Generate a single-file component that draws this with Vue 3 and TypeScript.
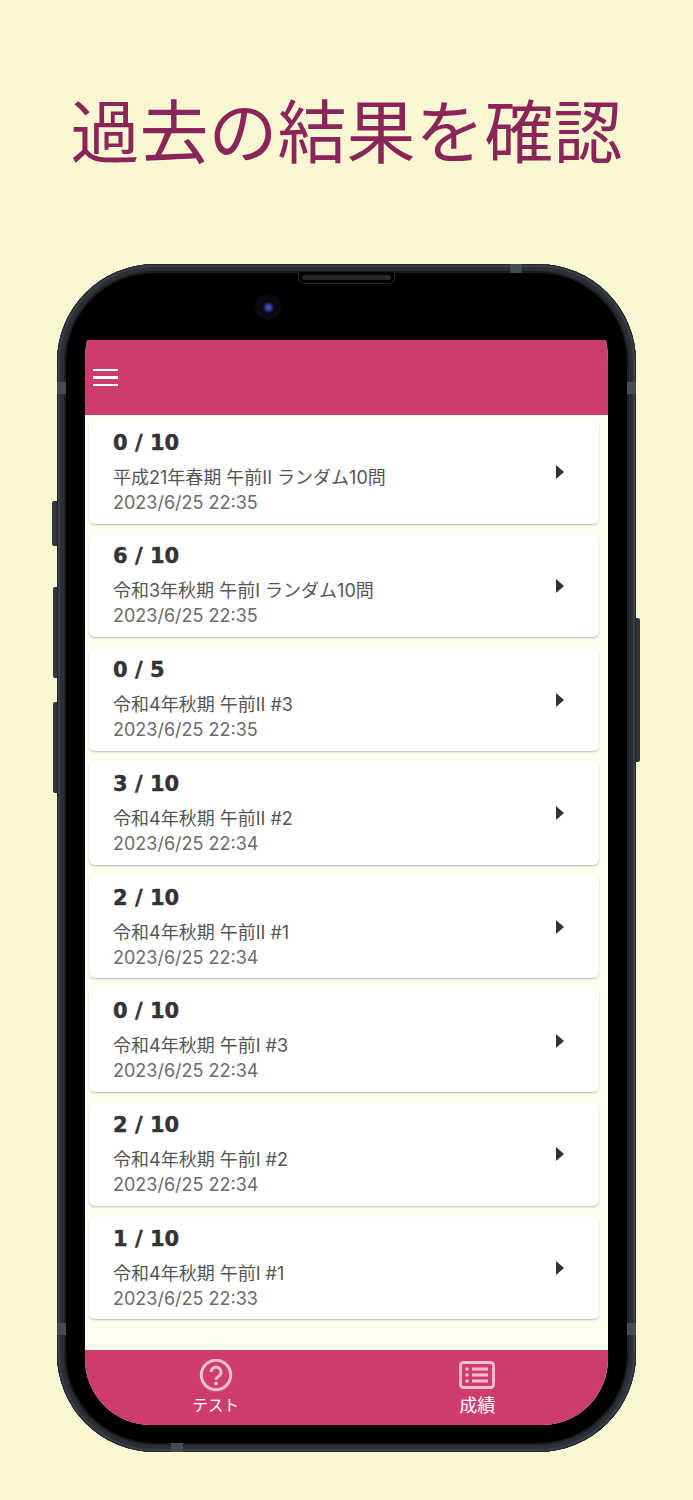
<script setup lang="ts">
interface Result { score: string; name: string; date: string }
const results: Result[] = [
  { score: '0 / 10', name: '平成21年春期 午前II ランダム10問', date: '2023/6/25 22:35' },
  { score: '6 / 10', name: '令和3年秋期 午前I ランダム10問', date: '2023/6/25 22:35' },
  { score: '0 / 5', name: '令和4年秋期 午前II #3', date: '2023/6/25 22:35' },
  { score: '3 / 10', name: '令和4年秋期 午前II #2', date: '2023/6/25 22:34' },
  { score: '2 / 10', name: '令和4年秋期 午前II #1', date: '2023/6/25 22:34' },
  { score: '0 / 10', name: '令和4年秋期 午前I #3', date: '2023/6/25 22:34' },
  { score: '2 / 10', name: '令和4年秋期 午前I #2', date: '2023/6/25 22:34' },
  { score: '1 / 10', name: '令和4年秋期 午前I #1', date: '2023/6/25 22:33' },
]
</script>

<template>
  <div class="page">
    <h1 class="headline">過去の結果を確認</h1>
    <div class="phone">
      <i class="btn btn-silent"></i>
      <i class="btn btn-up"></i>
      <i class="btn btn-down"></i>
      <i class="btn btn-power"></i>
      <i class="band band-lt"></i>
      <i class="band band-rt"></i>
      <i class="band band-lb"></i>
      <i class="band band-rb"></i>
      <i class="band band-top"></i>
      <i class="band band-bottom"></i>
      <div class="speaker"><span></span></div>
      <div class="camera"><span></span></div>
      <div class="screen">
        <header class="appbar">
          <div class="burger"><span></span><span></span><span></span></div>
        </header>
        <main class="list">
          <article v-for="(r, i) in results" :key="i" class="card">
            <div class="card-body">
              <div class="score">{{ r.score }}</div>
              <div class="name">{{ r.name }}</div>
              <div class="date">{{ r.date }}</div>
            </div>
            <svg class="arrow" viewBox="0 0 8 14" width="8" height="14"><path d="M0 0L8 7L0 14Z" fill="#333" /></svg>
          </article>
        </main>
        <nav class="tabs">
          <div class="tab">
            <svg class="tab-icon" viewBox="0 0 34 34" width="34" height="34">
              <circle cx="17" cy="17" r="14.7" fill="none" stroke="currentColor" stroke-width="3" />
              <path d="M12.2 14a4.9 4.9 0 1 1 7.6 4.1c-1.7 1.1-2.8 1.9-2.8 3.6" fill="none" stroke="currentColor" stroke-width="3" />
              <circle cx="17" cy="25.4" r="1.9" fill="currentColor" />
            </svg>
            <span class="tab-label small">テスト</span>
          </div>
          <div class="tab">
            <svg class="tab-icon" viewBox="0 0 36 28" width="36" height="28">
              <rect x="1.5" y="1.5" width="33" height="25" rx="3" fill="none" stroke="currentColor" stroke-width="3" />
              <circle cx="8" cy="8" r="1.8" fill="currentColor" />
              <circle cx="8" cy="14" r="1.8" fill="currentColor" />
              <circle cx="8" cy="20" r="1.8" fill="currentColor" />
              <path d="M13 8H29M13 14H29M13 20H29" stroke="currentColor" stroke-width="3" />
            </svg>
            <span class="tab-label">成績</span>
          </div>
        </nav>
      </div>
    </div>
  </div>
</template>

<style scoped>
.page {
  width: 693px;
  height: 1500px;
  background: #f9f6d2;
  overflow: hidden;
  font-family: "Inter", "Noto Sans CJK JP", sans-serif;
}
.headline {
  margin: 0;
  height: 264px;
  padding-top: 80px;
  box-sizing: border-box;
  text-align: center;
  font-family: "Noto Sans CJK JP", sans-serif;
  font-size: 69px;
  line-height: 96px;
  font-weight: 400;
  color: #8a2459;
  white-space: nowrap;
}
.phone {
  position: relative;
  width: 579px;
  height: 1188px;
  margin-left: 57px;
  box-sizing: border-box;
  padding: 76px 28px 27px;
  border-radius: 98px;
  background: #000;
  box-shadow: inset 0 0 0 1px #23272c, inset 0 0 0 3px #3a3f47, inset 0 0 0 7px #2a2e35, inset 0 0 0 9px #1b1d21;
}
.btn {
  position: absolute;
  background: #2f343b;
  border-radius: 2px 0 0 2px;
}
.btn-silent { left: -5px; top: 237px; width: 5px; height: 45px; }
.btn-up { left: -4px; top: 323px; width: 4px; height: 91px; }
.btn-down { left: -4px; top: 438px; width: 4px; height: 91px; }
.btn-power { right: -4px; top: 354px; width: 4px; height: 144px; border-radius: 0 2px 2px 0; }
.band { position: absolute; background: #454b54; }
.band-lt { left: 0; top: 118px; width: 9px; height: 12px; }
.band-rt { right: 0; top: 118px; width: 9px; height: 12px; }
.band-lb { left: 0; top: 1059px; width: 9px; height: 12px; }
.band-rb { right: 0; top: 1059px; width: 9px; height: 12px; }
.band-top { right: 114px; top: 0; width: 12px; height: 9px; }
.band-bottom { left: 114px; bottom: 0; width: 12px; height: 9px; }
.speaker {
  position: absolute;
  left: 241px;
  top: 8px;
  width: 97px;
  height: 12px;
  box-sizing: border-box;
  padding: 3px;
  background: #000;
  border: 1px solid #23262b;
  border-top: 0;
  border-radius: 0 0 6px 6px;
  display: flex;
}
.speaker span { flex: 1; background: #26282c; border-radius: 4px; }
.camera {
  position: absolute;
  left: 198px;
  top: 30px;
  width: 26px;
  height: 26px;
  border-radius: 50%;
  background: #0a0a12;
  display: flex;
  align-items: center;
  justify-content: center;
}
.camera span {
  width: 11px;
  height: 11px;
  border-radius: 50%;
  background: radial-gradient(circle, #3d4fb5 0 25%, #14183e 60%, #0b0c1e 100%);
}
.screen {
  display: flex;
  flex-direction: column;
  height: 100%;
  background: #feffee;
  overflow: hidden;
  border-radius: 3px 3px 66px 66px / 24px 24px 66px 66px;
}
.appbar {
  flex: none;
  height: 75px;
  background: #ce3c6e;
  display: flex;
  align-items: center;
  padding-left: 8px;
}
.burger {
  width: 25px;
  display: flex;
  flex-direction: column;
  gap: 5px;
}
.burger span { display: block; height: 2.5px; background: #fff; }
.list {
  flex: 1;
  min-height: 0;
  display: flex;
  flex-direction: column;
  gap: 11.2px;
  padding: 6px 9px 0 4px;
}
.card {
  flex: none;
  height: 102.5px;
  box-sizing: border-box;
  background: #fff;
  border-radius: 6px;
  box-shadow: 0 1px 2px rgba(0, 0, 0, 0.28);
  display: flex;
  align-items: center;
  padding: 0 35px 0 24px;
}
.card-body { flex: 1; min-width: 0; }
.score {
  font-family: "DejaVu Sans", sans-serif;
  font-weight: 700;
  font-size: 21px;
  line-height: 26px;
  color: #333;
  -webkit-text-stroke: 0.4px #333;
  margin-bottom: 9px;
}
.name {
  font-size: 18px;
  line-height: 25px;
  color: #555;
  white-space: nowrap;
}
.date {
  font-size: 18px;
  line-height: 25px;
  color: #6b6b6b;
  white-space: nowrap;
}
.arrow { flex: none; }
.tabs {
  flex: none;
  height: 75px;
  background: #ce3c6e;
  display: grid;
  grid-template-columns: 1fr 1fr;
}
.tab {
  display: flex;
  flex-direction: column;
  align-items: center;
  color: #fff;
  padding-top: 8px;
}
.tab-icon { color: #f1bfd0; height: 34px; display: block; }
.tab-label {
  font-family: "Noto Sans CJK JP", sans-serif;
  font-size: 18px;
  line-height: 24px;
  color: #fff;
}
.tab-label.small { font-size: 15.5px; }
</style>
